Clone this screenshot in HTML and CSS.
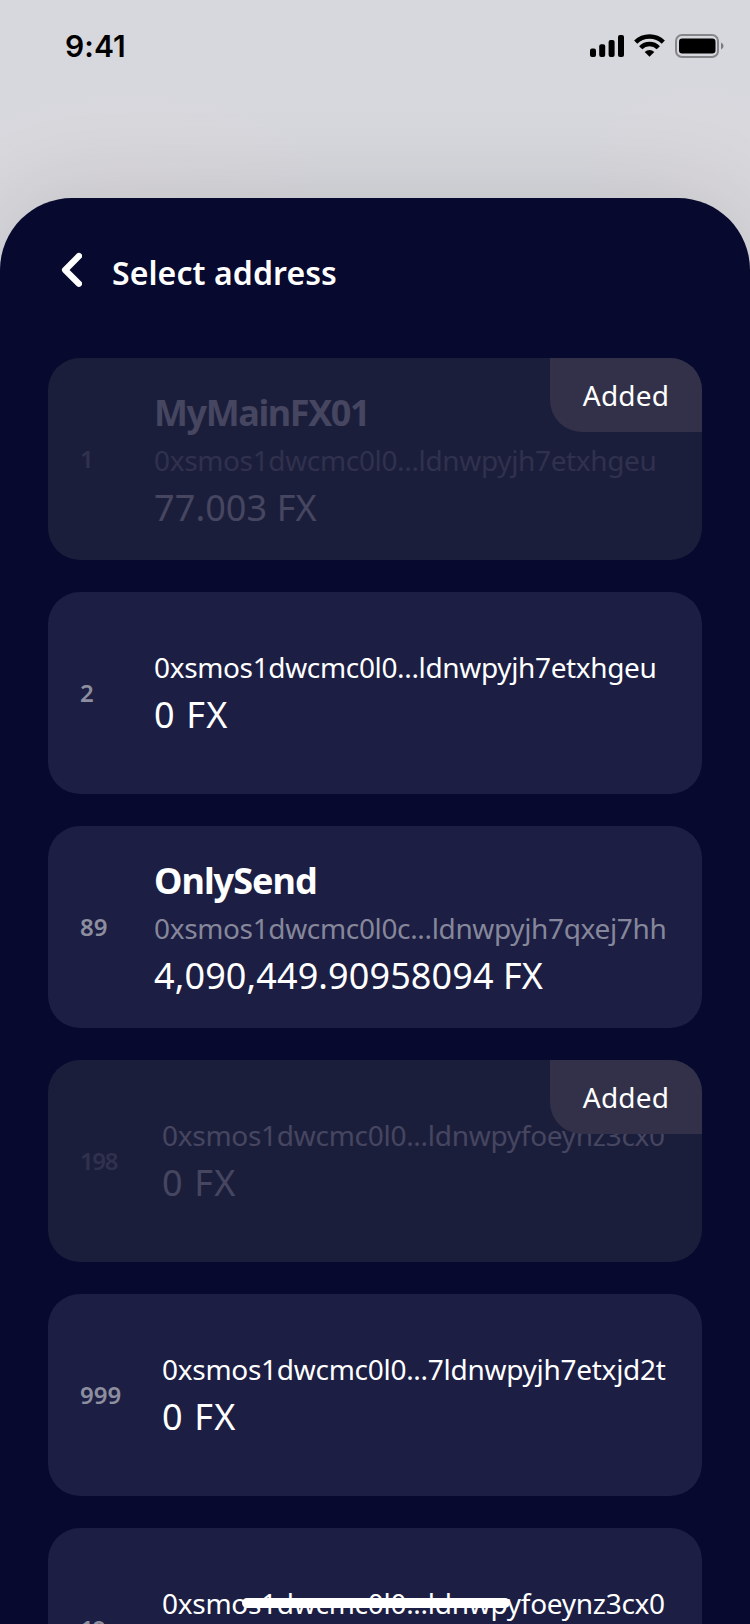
FILE: index.html
```
<!DOCTYPE html>
<html lang="en">
<head>
<meta charset="utf-8">
<title>Select address</title>
<link rel="stylesheet" href="styles.css">
</head>
<body>
<div class="screen">
  <header class="status">
    <span class="time">9:41</span>
    <div class="status-icons">
      <svg class="signal" width="34" height="22" viewBox="0 0 34 22"><rect x="0" y="13.5" width="6" height="8.500" rx="2"/><rect x="9.2" y="9.300" width="6" height="12.700" rx="2"/><rect x="18.600" y="5" width="6" height="17" rx="2"/><rect x="28" y="0" width="6" height="22" rx="2"/></svg>
      <svg class="wifi" width="31" height="23" viewBox="0 0 31 23"><g fill="none" stroke="#000" stroke-width="4.500"><path d="M1.700 8.100A19.600 19.600 0 0 1 29.300 8.100"/><path d="M6.700 13.700A12.300 12.300 0 0 1 24.300 13.700"/></g><path d="M15.500 22.700L10.700 17.900A6.800 6.800 0 0 1 20.300 17.900Z"/></svg>
      <svg class="battery" width="49" height="24" viewBox="0 0 49 24"><rect x="1" y="1" width="42" height="22" rx="6" fill="none" stroke="#000" stroke-opacity=".38" stroke-width="2"/><rect x="4" y="4.500" width="36.500" height="15" rx="3.200"/><path d="M46 8.500Q48.600 9.800 48.600 12T46 15.500Z" fill-opacity=".42"/></svg>
    </div>
  </header>
  <main class="sheet">
    <div class="title-row">
      <svg class="back" width="22" height="36" viewBox="0 0 22 36"><path d="M18.900 4.100L5.100 17.900L18.900 31.700" fill="none" stroke="#fff" stroke-width="6.300" stroke-linecap="round" stroke-linejoin="round"/></svg>
      <h1 class="title">Select address</h1>
    </div>
    <div class="list">
      <section class="card added">
        <span class="index">1</span>
        <div class="info">
          <div class="name tight">MyMainFX01</div>
          <div class="address muted">0xsmos1dwcmc0l0...ldnwpyjh7etxhgeu</div>
          <div class="balance">77.003 FX</div>
        </div>
        <span class="badge">Added</span>
      </section>
      <section class="card">
        <span class="index">2</span>
        <div class="info">
          <div class="address">0xsmos1dwcmc0l0...ldnwpyjh7etxhgeu</div>
          <div class="balance zero">0 FX</div>
        </div>
      </section>
      <section class="card">
        <span class="index">89</span>
        <div class="info">
          <div class="name">OnlySend</div>
          <div class="address muted">0xsmos1dwcmc0l0c...ldnwpyjh7qxej7hh</div>
          <div class="balance">4,090,449.90958094 FX</div>
        </div>
      </section>
      <section class="card wide added">
        <span class="index narrow">198</span>
        <div class="info">
          <div class="address">0xsmos1dwcmc0l0...ldnwpyfoeynz3cx0</div>
          <div class="balance zero">0 FX</div>
        </div>
        <span class="badge">Added</span>
      </section>
      <section class="card wide">
        <span class="index">999</span>
        <div class="info">
          <div class="address">0xsmos1dwcmc0l0...7ldnwpyjh7etxjd2t</div>
          <div class="balance zero">0 FX</div>
        </div>
      </section>
      <section class="card wide">
        <span class="index narrow">19</span>
        <div class="info">
          <div class="address">0xsmos1dwcmc0l0...ldnwpyfoeynz3cx0</div>
          <div class="balance zero">0 FX</div>
        </div>
      </section>
    </div>
  </main>
  <div class="home-bar"></div>
</div>
</body>
</html>
```
FILE: styles.css
```
* { box-sizing: border-box; }
body { margin: 0; font-family: "Noto Sans", sans-serif; }
.screen {
  position: relative;
  width: 750px;
  height: 1624px;
  overflow: hidden;
  display: flex;
  flex-direction: column;
  background:
    radial-gradient(ellipse 200px 90px at 130px 180px, rgba(226, 216, 219, .25), transparent),
    radial-gradient(ellipse 120px 100px at 700px 180px, rgba(226, 216, 219, .25), transparent),
    #d7d8dd;
}
.status {
  height: 198px;
  flex: none;
  display: flex;
  justify-content: space-between;
  align-items: flex-start;
  padding: 26px 26px 0 65px;
}
.time {
  font: 600 30px/40px Inter, sans-serif;
  letter-spacing: .1px;
}
.status-icons { display: flex; padding-top: 8px; }
.signal { margin-top: 1px; }
.wifi { margin-left: 10px; }
.battery { margin-left: 10px; }
.sheet {
  flex: 1;
  min-height: 0;
  overflow: visible;
  padding: 54px 48px 0;
  border-radius: 72px 72px 0 0;
  background: #07092e;
  box-shadow: 0 0 96px rgba(0, 0, 0, .12);
}
.title-row { display: flex; align-items: flex-start; padding-left: 12px; height: 106px; }
.back { flex: none; }
.title {
  margin: 0 0 0 30px;
  color: #fff;
  font-size: 32px;
  font-weight: 600;
  line-height: 42px;
  letter-spacing: .08px;
}
.list { display: flex; flex-direction: column; gap: 32px; }
.card {
  position: relative;
  flex: none;
  display: flex;
  align-items: center;
  height: 202px;
  padding-left: 32px;
  border-radius: 32px;
  overflow: hidden;
  background: #1c1e43;
  color: #fff;
  white-space: nowrap;
}
.index {
  width: 74px;
  flex: none;
  color: #8d8e9f;
  font-size: 24px;
  font-weight: 600;
  line-height: 34px;
}
.wide .index { width: 82px; }
.index.narrow { letter-spacing: -1.4px; }
.info { padding-top: 2px; }
.name {
  font-size: 36px;
  font-weight: 700;
  line-height: 54px;
  letter-spacing: -1px;
}
.name.tight { letter-spacing: -1.4px; }
.address { font-size: 28px; line-height: 40px; letter-spacing: -.35px; }
.wide .address { letter-spacing: -.28px; }
.muted { color: #86879a; }
.balance { font-size: 36px; line-height: 54px; padding-top: 1px; margin-bottom: -1px; letter-spacing: .1px; }
.balance.zero { letter-spacing: 1.2px; }
.added { background: #1b1e3b; color: #464660; }
.added .index, .added .muted { color: #30314d; }
.badge {
  position: absolute;
  top: 0;
  right: 0;
  width: 152px;
  height: 74px;
  border-bottom-left-radius: 32px;
  background: #323149;
  color: #fff;
  font-size: 28px;
  line-height: 74px;
  letter-spacing: .2px;
  text-align: center;
}
.home-bar {
  position: absolute;
  left: 242px;
  top: 1598px;
  width: 268px;
  height: 10px;
  border-radius: 5px;
  background: #fff;
}
```
